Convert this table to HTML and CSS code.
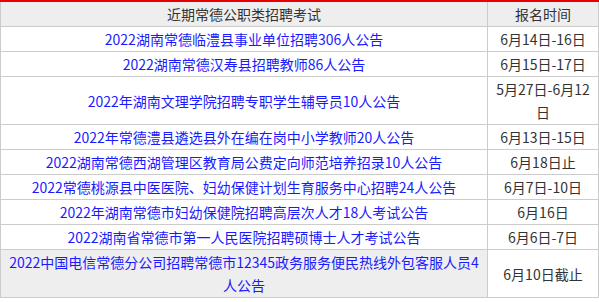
FILE: index.html
```html
<!DOCTYPE html>
<html lang="zh-CN">
<head>
<meta charset="utf-8">
<title>近期常德公职类招聘考试</title>
<link rel="stylesheet" href="styles.css">
</head>
<body>
<table class="exam-table">
  <colgroup>
    <col class="col-title">
    <col class="col-date">
  </colgroup>
  <thead>
    <tr>
      <th>近期常德公职类招聘考试</th>
      <th>报名时间</th>
    </tr>
  </thead>
  <tbody>
    <tr><td><a href="#">2022湖南常德临澧县事业单位招聘306人公告</a></td><td>6月14日-16日</td></tr>
    <tr><td><a href="#">2022湖南常德汉寿县招聘教师86人公告</a></td><td>6月15日-17日</td></tr>
    <tr><td><a href="#">2022年湖南文理学院招聘专职学生辅导员10人公告</a></td><td>5月27日-6月12日</td></tr>
    <tr><td><a href="#">2022年常德澧县遴选县外在编在岗中小学教师20人公告</a></td><td>6月13日-15日</td></tr>
    <tr><td><a href="#">2022湖南常德西湖管理区教育局公费定向师范培养招录10人公告</a></td><td>6月18日止</td></tr>
    <tr><td><a href="#">2022常德桃源县中医医院、妇幼保健计划生育服务中心招聘24人公告</a></td><td>6月7日-10日</td></tr>
    <tr><td><a href="#">2022年湖南常德市妇幼保健院招聘高层次人才18人考试公告</a></td><td>6月16日</td></tr>
    <tr><td><a href="#">2022湖南省常德市第一人民医院招聘硕博士人才考试公告</a></td><td>6月6日-7日</td></tr>
    <tr><td class="shaded"><a href="#">2022中国电信常德分公司招聘常德市12345政务服务便民热线外包客服人员4人公告</a></td><td>6月10日截止</td></tr>
  </tbody>
</table>
</body>
</html>
```
FILE: styles.css
```css
html, body {
  margin: 0;
  padding: 0;
  background: #fff;
}
.exam-table {
  border-collapse: collapse;
  width: 598px;
  table-layout: fixed;
  font-family: "Noto Sans CJK SC", "Noto Sans", sans-serif;
  font-size: 14px;
  color: #333;
  border-top: 2px solid #e60000;
}
.col-title { width: 487px; }
.col-date { width: 111px; }
.exam-table th,
.exam-table td {
  border: 1px solid #ccc;
  text-align: center;
  vertical-align: middle;
  line-height: 23px;
  padding: 1px 6px 0;
  font-weight: normal;
}
.exam-table th {
  background: #eee;
  border-top: 2px solid #e60000;
}
.exam-table td.shaded {
  background: #eee;
}
.exam-table a {
  color: #1a1aff;
  text-decoration: none;
}
```
